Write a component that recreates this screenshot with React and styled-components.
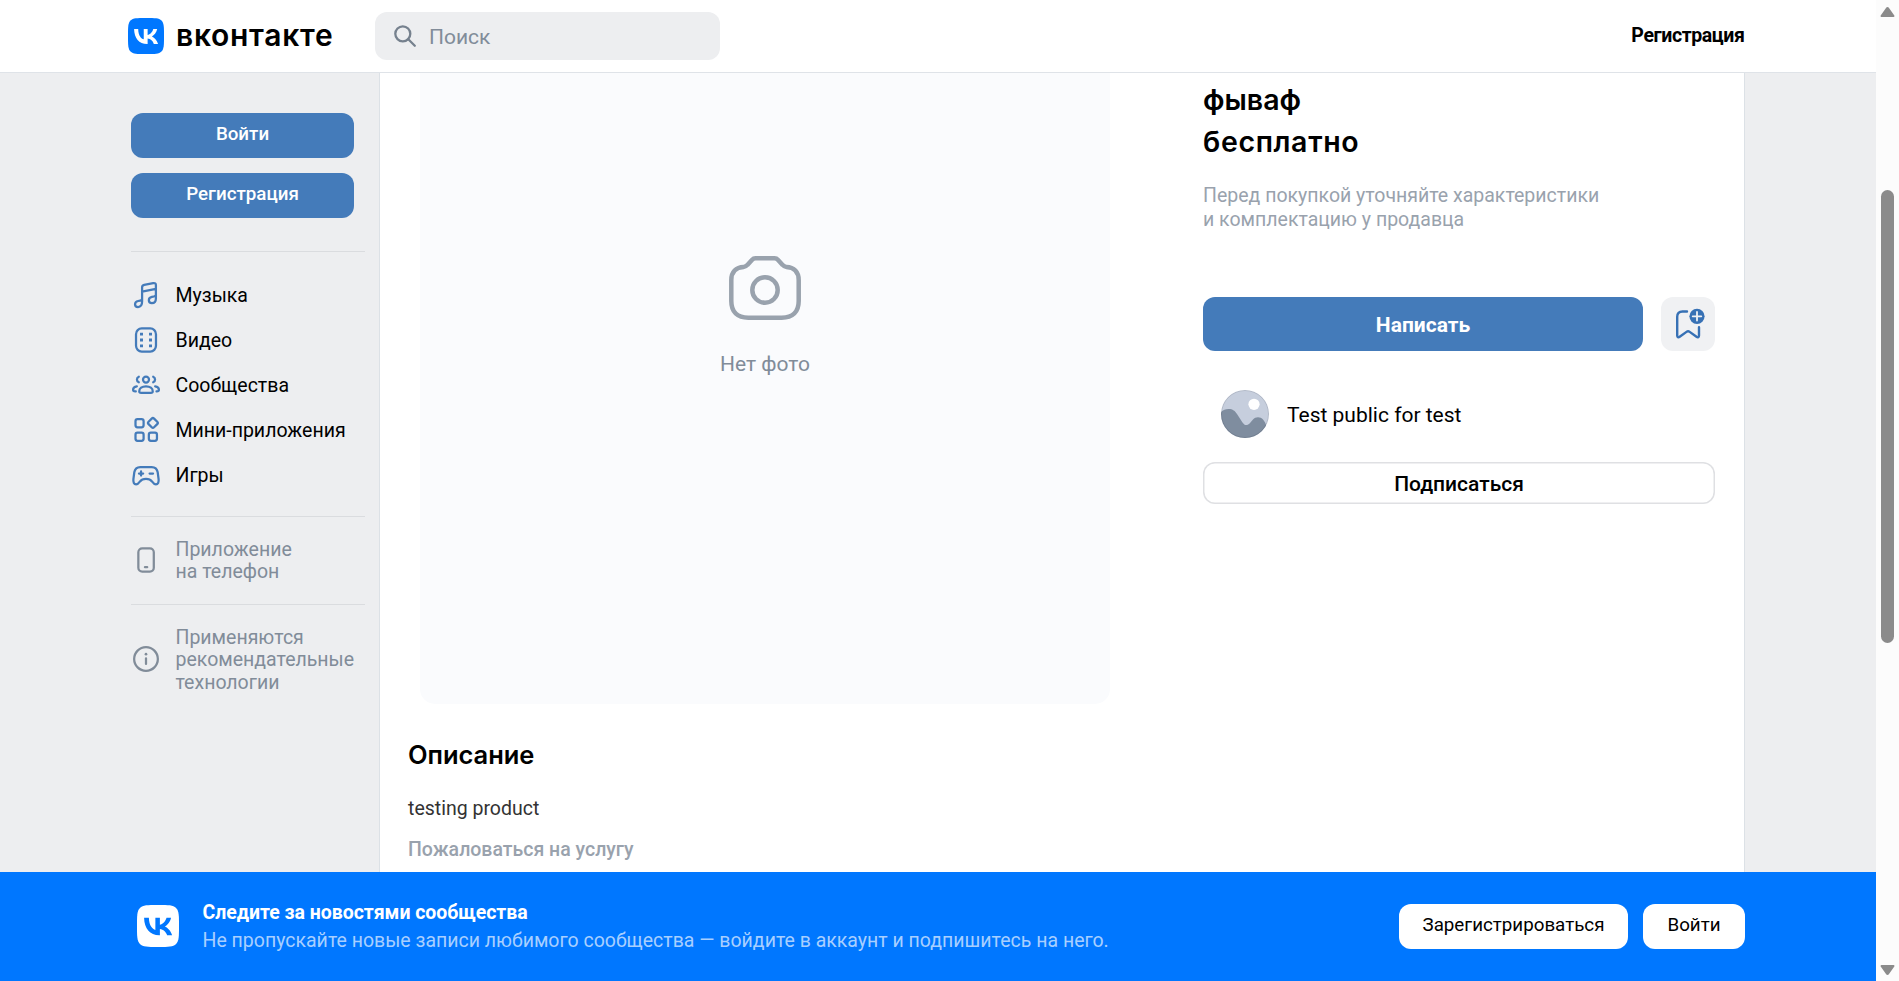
import React from "react";
import styled, { createGlobalStyle } from "styled-components";

const GlobalStyle = createGlobalStyle`
  *, *::before, *::after { box-sizing: border-box; }
  body {
    margin: 0;
    overflow: hidden;
    background: #edeef0;
    color: #000;
    font-family: Roboto, "Liberation Sans", sans-serif;
    font-size: 19.5px;
  }
  button, input { font: inherit; color: inherit; }
  h1, h2, p { margin: 0; }
`;

const display = `Inter, "Open Sans", sans-serif`;

const Window = styled.div`
  display: flex;
  width: 1899px;
  height: 981px;
  overflow: hidden;
`;

const Viewport = styled.div`
  display: flex;
  flex-direction: column;
  width: 1876px;
`;

const Header = styled.header`
  display: flex;
  align-items: center;
  height: 73px;
  flex: none;
  padding: 0 131.5px 0 128px;
  background: #fff;
  border-bottom: 1px solid #dfe3e8;
`;

const Brand = styled.a`
  display: flex;
  align-items: center;
  width: 247px;
`;

const Wordmark = styled.span`
  margin-left: 12px;
  padding-bottom: 3px;
  font: 600 30px/36px ${display};
  letter-spacing: 0.7px;
`;

const Search = styled.label`
  display: flex;
  align-items: center;
  gap: 12px;
  width: 345px;
  height: 48px;
  padding-left: 18px;
  border-radius: 12px;
  background: #edeef0;
`;

const SearchInput = styled.input`
  width: 240px;
  padding: 2px 0 0;
  border: 0;
  outline: 0;
  background: none;
  font-size: 21px;
  &::placeholder { color: #818c99; opacity: 1; }
`;

const HeaderLink = styled.a`
  margin-left: auto;
  padding-bottom: 2px;
  font-weight: 700;
  font-size: 19.5px;
  letter-spacing: -0.4px;
`;

const Body = styled.div`
  display: flex;
  flex: 1;
  min-height: 0;
`;

const Sidebar = styled.aside`
  width: 379px;
  padding: 40px 14px 0 131px;
`;

const AuthButtons = styled.div`
  display: flex;
  flex-direction: column;
  gap: 15px;
  width: 223px;
  margin-bottom: 33px;
`;

const Button = styled.button`
  display: flex;
  align-items: center;
  justify-content: center;
  height: ${(p) => p.$height || 45}px;
  width: ${(p) => p.$width || "auto"};
  padding: ${(p) => p.$drop || 0}px 0 ${(p) => p.$lift || 0}px;
  border: 0;
  box-shadow: ${(p) => (p.$tone === "outline" ? "inset 0 0 0 1.5px #dfe0e3" : "none")};
  border-radius: 12px;
  background: ${(p) => (p.$tone === "primary" ? "#447bba" : "#fff")};
  color: ${(p) => (p.$tone === "primary" ? "#fff" : "#000")};
  font-size: ${(p) => p.$size || 18.75}px;
  font-weight: ${(p) => p.$weight || 400};
`;

const Divider = styled.hr`
  height: 1px;
  margin: 0;
  border: 0;
  background: #dadcdf;
`;

const Nav = styled.nav`
  padding: 20.5px 0 18.5px;
`;

const NavItem = styled.a`
  display: flex;
  align-items: center;
  gap: 14.5px;
  height: 45px;
  color: #000;
  svg { color: #447bba; }
`;

const Note = styled.a`
  display: flex;
  align-items: center;
  gap: 14.5px;
  height: ${(p) => p.$height}px;
  padding-bottom: 1px;
  line-height: 22.4px;
  color: #818c99;
`;

const NoteText = styled.span`
  padding-top: ${(p) => p.$drop || 2}px;
`;

const Content = styled.main`
  display: flex;
  width: 1366px;
  background: #fff;
  border: solid #dce1e6;
  border-width: 0 1px;
`;

const Left = styled.section`
  width: 823px;
  padding-left: 28px;
`;

const Photo = styled.div`
  display: flex;
  flex-direction: column;
  align-items: center;
  gap: 32px;
  width: 690px;
  height: 631px;
  margin-left: 12px;
  padding-top: 183px;
  border-radius: 0 0 15px 15px;
  background: #fafbfd;
  color: #818c99;
  font-size: 21px;
`;

const SectionTitle = styled.h2`
  margin-top: 33px;
  font: 600 25.5px/36px ${display};
  letter-spacing: -0.05px;
`;

const Description = styled.p`
  margin-top: 24px;
  line-height: 24px;
  color: #333;
`;

const Report = styled.a`
  display: block;
  margin-top: 17px;
  line-height: 24px;
  font-weight: 500;
  color: #99a2ad;
`;

const Right = styled.section`
  width: 512px;
`;

const Title = styled.h1`
  padding-top: 6px;
  font: 600 28.5px/41px ${display};
`;

const Price = styled.p`
  margin-top: 1px;
  font: 600 28.5px/41px ${display};
  letter-spacing: 0.65px;
`;

const Hint = styled.p`
  margin-top: 22px;
  line-height: 24px;
  color: #99a2ad;
`;

const Actions = styled.div`
  display: flex;
  justify-content: space-between;
  margin-top: 65px;
`;

const BookmarkButton = styled.button`
  width: 54px;
  height: 54px;
  padding: 0;
  border: 0;
  border-radius: 12px;
  background: #f0f1f3;
`;

const Owner = styled.div`
  display: flex;
  align-items: center;
  gap: 18px;
  padding: 39px 18px 24px;
  font-size: 21px;
`;

const OwnerName = styled.span`
  padding-top: 2px;
`;

const Banner = styled.footer`
  display: flex;
  align-items: center;
  flex: none;
  height: 109px;
  padding: 0 131px 1px 137px;
  background: #0077ff;
`;

const BannerText = styled.div`
  margin: 1px 0 0 23.5px;
  line-height: 28px;
  color: #a8cfff;
`;

const BannerTitle = styled.div`
  font-weight: 700;
  letter-spacing: -0.03px;
  color: #fff;
`;

const BannerActions = styled.div`
  display: flex;
  gap: 15px;
  margin: 1px 0 0 auto;
`;

const ScrollTrack = styled.div`
  display: flex;
  flex-direction: column;
  align-items: center;
  width: 23px;
  padding: 6px 0 5px;
  background: #fcfcfc;
`;

const ScrollThumb = styled.div`
  width: 13px;
  height: 453px;
  margin: 172px 0 auto;
  border-radius: 7px;
  background: #8b8b8b;
`;

const Drawing = styled.svg`
  flex: none;
`;

const VkLogo = ({ size, bg, fg }) => (
  <Drawing width={size} height={size} viewBox="0 0 48 48">
    <path fill={bg} d="M0 23.04C0 12.18 0 6.75 3.37 3.37 6.75 0 12.18 0 23.04 0h1.92c10.86 0 16.29 0 19.67 3.37C48 6.75 48 12.18 48 23.04v1.92c0 10.86 0 16.29-3.37 19.67C41.25 48 35.82 48 24.96 48h-1.92c-10.86 0-16.29 0-19.67-3.37C0 41.25 0 35.82 0 24.96z" />
    <path fill={fg} d="M25.54 34.58C14.6 34.58 8.36 27.08 8.1 14.6h5.48c.18 9.16 4.22 13.04 7.42 13.84V14.6h5.16v7.9c3.16-.34 6.48-3.94 7.6-7.9h5.16c-.86 4.88-4.46 8.48-7.02 9.96 2.56 1.2 6.66 4.34 8.22 10.02h-5.68c-1.22-3.8-4.26-6.74-8.28-7.14v7.14z" />
  </Drawing>
);

const Icon = ({ children }) => (
  <Drawing width="30" height="30" viewBox="0 0 20 20" fill="none" stroke="currentColor" strokeWidth="1.5" strokeLinecap="round" strokeLinejoin="round">
    {children}
  </Drawing>
);

const MusicIcon = () => (
  <Icon>
    <path d="M7.4 14.6V5.100c0-1 .5-1.500 1.400-1.700l6-1.100c1.200-.2 1.800.3 1.800 1.300v8.900c0 1.900-1 3.100-2.700 3.100-1.200 0-2-.8-2-1.900 0-1.200.8-1.900 2-2.200l1.400-.3c.9-.2 1.300-.5 1.300-1.300M7.400 8l9.200-1.900M7.400 12.500c0 .8-.4 1.200-1.300 1.400l-1.300.3c-1.300.3-2.100 1-2.100 2.100 0 1.100.8 1.900 2 1.900 1.700 0 2.700-1.300 2.700-3.600" transform="translate(0 -.2)" />
  </Icon>
);

const VideoIcon = () => (
  <Icon>
    <rect x="3.35" y="2.3" width="13.3" height="15.4" rx="3.8" />
    <path strokeWidth="1.9" strokeLinecap="butt" d="M6 6.1h2M6 10h2M6 13.9h2M12 6.1h2M12 10h2M12 13.9h2" />
  </Icon>
);

const GroupsIcon = () => (
  <Icon>
    <circle cx="10" cy="6.4" r="2" />
    <path d="M10 10.9c2.7 0 4.5 1.4 4.5 3.2 0 .7-.5 1.1-1.3 1.1H6.8c-.8 0-1.3-.4-1.3-1.1 0-1.8 1.8-3.2 4.5-3.2zM5.2 4.5a2 2 0 0 0 0 3.7M14.8 4.5a2 2 0 0 1 0 3.7M3.9 10.9c-1.7.2-2.5 1.1-2.5 2.3 0 .7.5 1.1 1.4 1.1h.4M16.1 10.9c1.7.2 2.5 1.1 2.5 2.3 0 .7-.5 1.1-1.4 1.1H17" />
  </Icon>
);

const AppsIcon = () => (
  <Icon>
    <rect x="3" y="2.8" width="5.4" height="5.4" rx="1.3" />
    <rect x="3" y="11.8" width="5.4" height="5.4" rx="1.3" />
    <rect x="11.9" y="11.8" width="5.4" height="5.4" rx="1.3" />
    <rect x="12" y="2.7" width="5.2" height="5.2" rx="1.1" transform="rotate(45 14.6 5.3)" />
  </Icon>
);

const GamesIcon = () => (
  <Icon>
    <path d="M6.2 4.7h7.6c2.4 0 3.6 1.3 4 3.5l.6 4.6c.2 2.1-.4 3.5-1.8 3.5-1.1 0-1.7-.8-2.5-1.9-.9-1.2-1.9-1.9-4.1-1.9s-3.2.7-4.1 1.9c-.8 1.1-1.4 1.9-2.5 1.9-1.4 0-2-1.4-1.8-3.5l.6-4.6c.4-2.2 1.6-3.5 4-3.5z" />
    <path d="M5.3 9h2.8M6.7 7.6v2.8M12.4 9h2.3" />
  </Icon>
);

const PhoneIcon = () => (
  <Icon>
    <rect x="4.9" y="2.3" width="10.3" height="15.4" rx="2.6" />
    <path d="M9.3 14.8h1.5" />
  </Icon>
);

const InfoIcon = () => (
  <Icon>
    <circle cx="10" cy="10" r="7.9" />
    <path d="M10 9.6v3.7" />
    <circle cx="10" cy="6.8" r=".9" fill="currentColor" stroke="none" />
  </Icon>
);

const SearchIcon = () => (
  <Drawing width="24" height="24" viewBox="0 0 24 24" fill="none" stroke="#76818e" strokeWidth="2.3" strokeLinecap="round">
    <circle cx="9.8" cy="9.8" r="7.5" />
    <path d="M15.3 15.3l6.5 6.5" />
  </Drawing>
);

const CameraIcon = () => (
  <Drawing width="72" height="64" viewBox="0 0 72 64" fill="none" stroke="#99a2ad" strokeWidth="4.5">
    <path d="M26.5 2.3h19c1.6 0 2.6.5 3.6 1.6l4.5 5c1.1 1.3 2.1 1.900 3.800 2C65 11.200 69.700 16 69.700 24v21c0 11-6 16.700-17 16.700H19.300C8.300 61.700 2.300 56 2.300 45V24c0-8 4.700-12.800 12.300-13.100 1.700-.1 2.700-.7 3.800-2l4.500-5c1-1.100 2-1.600 3.600-1.600z" />
    <circle cx="36" cy="34" r="12.7" />
  </Drawing>
);

const BookmarkIcon = () => (
  <Drawing width="54" height="54" viewBox="0 0 54 54" fill="none" stroke="#3771b5" strokeWidth="2.4" strokeLinecap="round" strokeLinejoin="round">
    <path d="M26 14.5h-4.5c-3.600 0-5.300 1.700-5.300 5.300v18.700c0 1.900 1.200 2.300 2.500 1.300l6.800-4.900c1.100-.8 2.100-.8 3.200 0l6.800 4.900c1.300 1 2.500.6 2.500-1.300v-8.300" />
    <circle cx="36" cy="19.3" r="7.6" fill="#3771b5" stroke="none" />
    <path stroke="#f0f1f3" strokeWidth="1.8" d="M36 15v8.6M31.7 19.3h8.6" />
  </Drawing>
);

const Avatar = () => (
  <Drawing width="48" height="48" viewBox="0 0 48 48">
    <defs>
      <clipPath id="avatar"><circle cx="24" cy="24" r="24" /></clipPath>
    </defs>
    <g clipPath="url(#avatar)">
      <path fill="#c6cedd" d="M0 0h48v48H0z" />
      <circle cx="33" cy="14.3" r="5.6" fill="#fff" />
      <path fill="#7f8d9f" d="M0 22c2-2 4.5-3 7.5-3 4.5 0 6.5 2 8.5 5l5.5 8.5c2.2 3.3 4.8 3.3 7.5.5l3-3.5c2.5-3 7.5-3 10 0 1.5 2 3 4 3 6V48H0z" />
      <circle cx="24" cy="24" r="23.5" fill="none" stroke="#000" strokeOpacity=".1" />
    </g>
  </Drawing>
);

const ScrollArrow = ({ down }) => (
  <Drawing width="15" height="12" viewBox="0 0 15 12" fill="#8b8b8b" stroke="#8b8b8b" strokeWidth="2" strokeLinejoin="round">
    <path d={down ? "M1.5 2h12l-5.300 7.500q-.7.7-1.400 0z" : "M1.5 10h12L8.200 2.500q-.7-.7-1.400 0z"} />
  </Drawing>
);

const navItems = [
  ["Музыка", MusicIcon],
  ["Видео", VideoIcon],
  ["Сообщества", GroupsIcon],
  ["Мини-приложения", AppsIcon],
  ["Игры", GamesIcon],
];

export default function App() {
  return (
    <>
      <GlobalStyle />
      <Window>
        <Viewport>
          <Header>
            <Brand>
              <VkLogo size={36} bg="#0077ff" fg="#fff" />
              <Wordmark>вконтакте</Wordmark>
            </Brand>
            <Search>
              <SearchIcon />
              <SearchInput placeholder="Поиск" />
            </Search>
            <HeaderLink>Регистрация</HeaderLink>
          </Header>
          <Body>
            <Sidebar>
              <AuthButtons>
                <Button $tone="primary" $lift={4} $weight={500}>Войти</Button>
                <Button $tone="primary" $lift={4} $weight={500}>Регистрация</Button>
              </AuthButtons>
              <Divider />
              <Nav>
                {navItems.map(([label, Glyph]) => (
                  <NavItem key={label}>
                    <Glyph />
                    {label}
                  </NavItem>
                ))}
              </Nav>
              <Divider />
              <Note $height={87}>
                <PhoneIcon />
                <NoteText>Приложение<br />на телефон</NoteText>
              </Note>
              <Divider />
              <Note $height={109}>
                <InfoIcon />
                <NoteText $drop={3}>Применяются<br />рекомендательные<br />технологии</NoteText>
              </Note>
            </Sidebar>
            <Content>
              <Left>
                <Photo>
                  <CameraIcon />
                  Нет фото
                </Photo>
                <SectionTitle>Описание</SectionTitle>
                <Description>testing product</Description>
                <Report>Пожаловаться на услугу</Report>
              </Left>
              <Right>
                <Title>фываф</Title>
                <Price>бесплатно</Price>
                <Hint>Перед покупкой уточняйте характеристики<br />и комплектацию у продавца</Hint>
                <Actions>
                  <Button $tone="primary" $height={54} $width="440px" $size={21} $weight={700} $drop={2}>Написать</Button>
                  <BookmarkButton aria-label="Сохранить"><BookmarkIcon /></BookmarkButton>
                </Actions>
                <Owner>
                  <Avatar />
                  <OwnerName>Test public for test</OwnerName>
                </Owner>
                <Button $tone="outline" $height={42} $width="512px" $size={21} $weight={500} $drop={2}>Подписаться</Button>
              </Right>
            </Content>
          </Body>
          <Banner>
            <VkLogo size={42} bg="#fff" fg="#0077ff" />
            <BannerText>
              <BannerTitle>Следите за новостями сообщества</BannerTitle>
              Не пропускайте новые записи любимого сообщества — войдите в аккаунт и подпишитесь на него.
            </BannerText>
            <BannerActions>
              <Button $width="229px" $lift={4}>Зарегистрироваться</Button>
              <Button $width="102px" $lift={4}>Войти</Button>
            </BannerActions>
          </Banner>
        </Viewport>
        <ScrollTrack>
          <ScrollArrow />
          <ScrollThumb />
          <ScrollArrow down />
        </ScrollTrack>
      </Window>
    </>
  );
}
